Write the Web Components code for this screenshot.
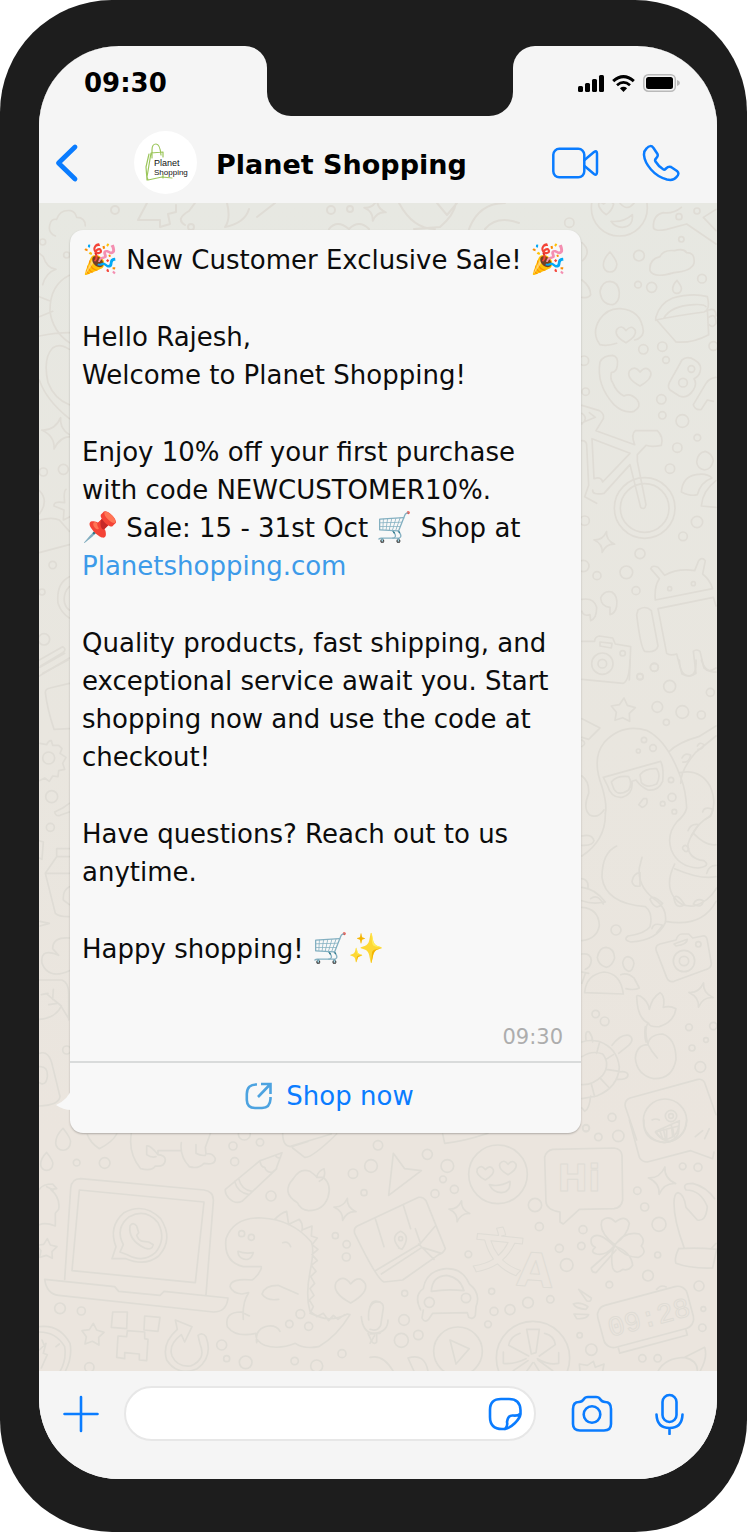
<!DOCTYPE html>
<html lang="en">
<head>
<meta charset="utf-8">
<meta name="viewport" content="width=device-width, initial-scale=1">
<title>Planet Shopping chat</title>
<style>
  body { margin: 0; background: #fff; font-family: "DejaVu Sans", "Noto Color Emoji", sans-serif; color: #0c0c0c; }
  a { color: #3d9be9; text-decoration: none; }
  .emoji { font-size: 29px; line-height: 0; }
</style>
</head>
<body>
<phone-frame>
  <status-bar time="09:30"></status-bar>
  <chat-header name="Planet Shopping"></chat-header>
  <chat-area>
    <chat-bubble time="09:30">
      <p><span class="emoji">🎉</span> New Customer Exclusive Sale! <span class="emoji">🎉</span></p>
      <p>Hello Rajesh,<br>Welcome to Planet Shopping!</p>
      <p>Enjoy 10% off your first purchase<br>with code NEWCUSTOMER10%.<br><span class="emoji">📌</span> Sale: 15 - 31st Oct <span class="emoji">🛒</span> Shop at<br><a href="#shop">Planetshopping.com</a></p>
      <p>Quality products, fast shipping, and<br>exceptional service await you. Start<br>shopping now and use the code at<br>checkout!</p>
      <p>Have questions? Reach out to us<br>anytime.</p>
      <p>Happy shopping! <span class="emoji">🛒✨</span></p>
      <span slot="action">Shop now</span>
    </chat-bubble>
  </chat-area>
  <chat-composer></chat-composer>
</phone-frame>

<script>
class Base extends HTMLElement {
  connectedCallback() {
    if (this.shadowRoot) return;
    this.attachShadow({ mode: "open" }).innerHTML = this.render();
  }
}

customElements.define("phone-frame", class extends Base {
  render() {
    return `<style>
      :host { display: flex; box-sizing: border-box; min-height: calc(100vh - 1px); margin: 0 1px 1px 0;
        padding: 46px 30px 53px 39px; background: #1d1d1d; border-radius: 112px; }
      main { flex: 1; min-width: 0; display: flex; flex-direction: column; overflow: hidden;
        border-radius: 80px; background: #f5f5f5; }
      ::slotted(chat-area) { flex: 1; }
    </style><main><slot></slot></main>`;
  }
});

customElements.define("status-bar", class extends Base {
  render() {
    return `<style>
      :host { display: grid; grid-template-columns: 228fr 246px 204fr; height: 70px; background: #1d1d1d; }
      .side { display: flex; align-items: center; background: #f5f5f5; box-sizing: border-box; }
      .left { border-top-right-radius: 22px; padding: 4px 0 0 45px; font-size: 26px; font-weight: bold; color: #000; }
      .right { border-top-left-radius: 22px; padding: 4px 37px 0 0; justify-content: flex-end; gap: 8px; }
      .mid { background: #f5f5f5; }
      .notch { height: 100%; background: #1d1d1d; border-radius: 0 0 24px 24px; }
      svg { display: block; }
    </style>
    <div class="side left"><time>${this.getAttribute("time")}</time></div>
    <div class="mid"><div class="notch"></div></div>
    <div class="side right">
      <svg width="26" height="17" viewBox="0 0 26 17" aria-label="Signal">
        <rect x="0" y="11" width="5" height="6" rx="1.5"/><rect x="7" y="8" width="5" height="9" rx="1.5"/>
        <rect x="14" y="4" width="5" height="13" rx="1.5"/><rect x="21" y="0" width="5" height="17" rx="1.5"/>
      </svg>
      <svg width="23" height="17" viewBox="0 0 23 17" fill="none" stroke="#000" aria-label="Wi-Fi">
        <path d="M1.2 6.2Q11.5-3 21.8 6.2" stroke-width="3"/><path d="M5 10.2Q11.5 4.6 18 10.2" stroke-width="2.8"/>
        <path d="M7.9 13.3Q11.5 10.4 15.1 13.3L11.5 17z" fill="#000" stroke="none"/>
      </svg>
      <svg width="37" height="18" viewBox="0 0 37 18" aria-label="Battery">
        <rect x=".8" y=".8" width="31.5" height="16.4" rx="4.5" fill="none" stroke="#b9b9b9" stroke-width="1.5"/>
        <rect x="3" y="3" width="27" height="12" rx="2.5"/><path d="M34 6q3 1 3 3t-3 3z" fill="#b9b9b9"/>
      </svg>
    </div>`;
  }
});

customElements.define("chat-header", class extends Base {
  render() {
    return `<style>
      :host { display: flex; align-items: center; box-sizing: border-box; height: 87px; padding: 6px 37px 0 16px; background: #f5f5f5; }
      button { border: 0; padding: 0; background: none; display: block; cursor: pointer; }
      svg { display: block; fill: none; stroke: #0a7cff; stroke-linejoin: round; stroke-linecap: round; }
      .avatar { width: 63px; height: 63px; margin: 0 19px 0 55px; border-radius: 50%; background: #fff; flex: none; }
      .avatar svg { stroke: #9cc65c; }
      h1 { flex: 1; min-width: 0; margin: 0; padding-top: 4px; font-size: 27px; line-height: 36px; color: #000; white-space: nowrap; }
      .video { margin-right: 43px; }
    </style>
    <button aria-label="Back"><svg width="24" height="40" viewBox="0 0 24 40"><path d="M20 4 3.500 20 20 36" stroke-width="4.800"/></svg></button>
    <div class="avatar"><svg width="63" height="63" viewBox="0 0 63 63" stroke-width="1.200">
      <path d="M17 22 13 46 14 49 28 46 38 47M17 22 29 21 29 26M15 23 12 36 13 49M29 47V44M18 27V19Q18 13 22 13Q26 13 27 24"/>
      <text x="20" y="35" font-family="Liberation Sans, sans-serif" font-size="9" fill="#111" stroke="none">Planet</text>
      <text x="20" y="44" font-family="Liberation Sans, sans-serif" font-size="8" fill="#111" stroke="none">Shopping</text>
    </svg></div>
    <h1>${this.getAttribute("name")}</h1>
    <button class="video" aria-label="Video call"><svg width="48" height="32" viewBox="0 0 48 32" stroke-width="2.500">
      <rect x="2.300" y="1.800" width="31" height="28.500" rx="6"/><path d="M33.500 13 43 5q3-2 3 1.500V25q0 4-3 2L33.500 19"/></svg></button>
    <button aria-label="Voice call"><svg width="38" height="38" viewBox="0 0 38 38" stroke-width="2.500">
      <path d="M4.500 4.500Q8.500 0 11.500 4L15.500 10Q16.500 12 14 14.500Q12.500 16 13.500 17.500Q16.500 22.500 21.500 25.500Q22.500 26 24 24.500Q26.500 22 29 23L35 27Q38 29.500 34.500 33Q31.500 37 25 35.500Q15.500 33 9 25.500Q2.500 18 2 11Q1.800 7 4.500 4.500Z"/></svg></button>`;
  }
});

/* Each doodle sheet is [x, y, w, h, markup, dots]; its drawing units are a third of a pixel. */
const star = (x, y, r) => {
  let d = "";
  for (let i = 0; i < 10; i++) {
    const a = i * Math.PI / 5 - 1.5, k = i % 2 ? r * 0.55 : r;
    d += (i ? "L" : "M") + Math.round(x + k * Math.cos(a)) + " " + Math.round(y + k * Math.sin(a));
  }
  return `<path d="${d}Z"/>`;
};
const spark = (x, y, r) => `<path transform="rotate(12 ${x} ${y})" d="M${x} ${y - r}q${r * .1} ${r * .8} ${r} ${r}q${-r * .8} ${r * .1} ${-r} ${r}q${-r * .1} ${-r * .8} ${-r} ${-r}q${r * .8} ${-r * .1} ${r} ${-r}z"/>`;
const heart = (x, y, r) => `<path d="M${x} ${y + r}Q${x - r * 1.300} ${y + r * .3} ${x - r} ${y - r * .4}Q${x - r * .5} ${y - r} ${x} ${y - r * .3}Q${x + r * .6} ${y - r} ${x + r} ${y - r * .3}Q${x + r * 1.200} ${y + r * .3} ${x} ${y + r}Z"/>`;
const drop = (x, y, r) => `<path d="M${x} ${y - r * 1.600}q${r * 1.200} ${r * 1.500} ${r} ${r * 2}a${r} ${r} 0 0 1 ${-2 * r} 0q0 ${-r} ${r} ${-r * 2}z"/>`;

const sheets = [
  [521, -3, 188, 480, `
    <circle cx="178" cy="24" r="84"/><path d="M117 20q-5-20 14-8q16-16 30 0q-5 20-22 32q-14-8-22-24zM180 10q22 26 43-2M153 64q38 4 64-20q4 36-30 38q-22 0-34-18z"/>
    <path d="M468 132 380 72 320 88q-40 8-40-8q0-36 30-42 30 4 54-16M468 28 430 52 468 92"/>
    ${drop(150, 188, 20)}${drop(351, 262, 13)}
    <path d="M270 212q-4-34 30-42q10-22 44-18q26-8 36 6q26 0 22 32q-8 24-60 28q-62 18-72-6z"/>
    <path d="M66 128q30 26 2 54M66 240q26 20 26 44q-6 12-26 8M120 274q6-30 30-30q26 2 28 34q0 30-20 36q-34 0-38-40z"/>
    <path d="M120 434q-26-34-2-74q24-36 62-34q64 4 70 68q-2 20-26 26M120 434q20 6 50-4"/>${heart(198, 400, 28)}
    <path d="M288 350q12-40 50-56q60-16 104-4q10 40-10 46q-90 12-144 24q-2 4 0-10zM312 354q20-36 90-40q30-2 36 6M290 360l58 66q50 4 98-22l-4-78M446 330q22-8 22 18M446 352q22-16 22 18M448 374q10 12 20-4"/>
    <path d="M120 486q10-20 38-20q18 4 14 30q-2 20-18 22q-4 20 4 30q12 30 34 40q20-10 40 12q14 20-10 34q-30 8-60-20q-54-60-42-128z"/>${heart(240, 526, 32)}
    <path d="M328 548 366 480q16-14 38 0q24 14 16 36q-4 14-18 20q10 14-2 34q-18 28-42 18l-28-18q-8-8-2-22z"/><circle cx="369" cy="548" r="13"/><circle cx="394" cy="507" r="10"/>
    <path d="M468 532q-20 2-30 18l-38 64q6 18 24 14l18-28 18 4"/>
    <path d="M66 616l52 16q16 10 12 24L108 692l116 42q-12-32 2-42h66q20 20 12 44q-30 6-46 0l-26 28v20l26 130q-4 18-16 8L210 794l-78 86q-36 6-34-10M66 668l40-16-18-14M96 716l6 120q22-8 26 10l82-86zM66 722q14 0 14 14l6 120-12 34 36 20M66 640q20 14 0 32"/>
    <circle cx="254" cy="924" r="91"/><circle cx="254" cy="924" r="73"/>
    <path d="M410 786q2-28 26-32q20 6 24 28q-6 26-26 28q-22-4-24-24zM364 876q4-46 44-52q32-6 48 10q-34 12-44 50q-20 6-48-8M468 842q-40 30-44 76l44 4"/>
    ${spark(133, 1026, 32)}
    <path d="M286 1200q-4-40 12-64l-26-30q4-12 22-4l20 24q40-22 90-14l12-30q10-12 20 0l-8 40q22 18 30 44zM294 1226 460 1192l8 26M294 1226l26 134q10 8 30 2l16 60q24 12 42-2l-8-66q8-8 20 0l12 50q14 16 36 0M234 1230q22-16 40 2l20 106q-6 22-40 16q-12-10-24-110z"/><circle cx="329" cy="1166" r="6"/><circle cx="400" cy="1151" r="6"/>
    <path d="M66 1198q36-6 44 24q0 34-18 40l-2-18q-20 6-24-10M122 1194q10-24 34-18q18 12 14 42q-4 22-20 26v-22q-26-2-28-28z"/>
    <path d="M66 1324h38q0-14 14-16l40 6 8 18 46 8-4 100M120 1326l36 4-2 14-34-6z"/><circle cx="127" cy="1391" r="32"/><circle cx="127" cy="1391" r="13"/><circle cx="188" cy="1360" r="8"/>`,
    "28 68 14 357 50 9 411 33 9 364 118 8 237 167 16 426 236 13 234 254 10 275 262 15 250 448 14 307 440 14 318 480 10 460 438 13 77 575 11 304 598 14 307 646 11 367 663 19 412 713 10 352 743 14 330 806 14 411 966 17 369 1009 13 74 962 14 240 1061 15 199 1117 19 111 1127 12 228 1172 12 283 1402 12 240 1430 9 72 482 14 70 1098 17"],
  [521, 457, 188, 480, `
    <path d="M66 58l124 12q18-8 20-70M358 0q2 48 30 48q22-2 20-48M424 0q12 40 44 36M66 176l54 28-34 34-20-6M66 240q16 10 0 20"/>
    ${star(189, 152, 38)}
    <path d="M136 460q6-26-10-80q-32-84 6-132q54-60 130-36q60 30 100 140q16 40 18 92q-4 20-28 40q-34 40-18 86q20 50 80 54q40-6 18-22q-50-6-48-50q20-60 68-84q20-40-2-90q-30-52-90-40M326 276q30-30 90-46l52-32M362 370q0-40 44-92q30-24 62-50"/>
    <path d="M130 352l172-48q10 20 6 60q-14 30-44 26q-22-10-36-30l-12 4q4 40-30 48q-32 4-44-36zM154 366q16-20 52-16q12 20 0 40q-30 20-44-2zM240 344q16-20 50-18q14 20 0 46q-30 14-46-4zM236 434l14-18h10q6 20-14 26z"/>
    <path d="M136 460q2 80-70 128M66 348q22 16 20 52q-18 44 2 64q24 14 44-14M170 558q-44 20-44 94q10 78 130 88q24 20 14 60q-14 20-66 28q-16 12 8 18q80-4 104-58q6-40-24-64q-60-40-54-100l8-32M66 682q40 4 70 44q-40 8-70-4M344 612q-30 60-2 100q20 30 60 26q44-12 68-54M344 626q80 34 124 24M316 784q110 20 152-60M400 520q40 40 68 34M66 742q50 4 52 54q-6 40-52 46"/>
    <path d="M66 528q30-8 36 14q-4 16-36 14M66 656q20 4 18 26M92 716q20-16 38 16M216 664q4-24 24-26v40q-22 4-24-14M270 718q6-16 38 12q-20 26-38-12M276 806q4-20 32-10l-18 22M342 716q6-20 32 18q-26 16-32-18M400 732q10-20 30-10q-4 26-30 10M428 456q4-18 30-8q0 20-22 30M384 512q8-22 32-18l-22 34M368 562q8-14 18 4q-6 18-18 0M366 294q8-18 26-8q-6 24-24 20M412 258q6-14 20-4q-4 16-18 14M440 640q6-24 28-24"/>
    <path d="M288 870q-2-14 12-18l48-12q6-18 18-18h20l12 12 30-6q12-2 14 14l12 68q0 14-14 18l-98 36q-16 4-22-12zM342 852l40-14q0 16-34 20z"/><circle cx="372" cy="903" r="32"/><circle cx="372" cy="903" r="14"/><circle cx="415" cy="853" r="8"/>
    ${spark(423, 1005, 37)}
    <path d="M112 892q6-30 26-30q24 2 26 32q-8 26-26 28q-24-8-26-30zM188 908q4-18 16-18q16 4 18 20q-4 24-16 24q-16-6-18-26zM74 998q4-54 58-62q50 4 58 66zM66 882q26-4 28 20q-2 20-18 26M66 936l20 4M182 944q20-8 40 10l16 30q-14 8-40 2M66 970l10-30"/>
    <path d="M266 1090q-34-14-36-80q0-6 10-2q24 14 28 40q8-36 32-50q16 10 10 44q20-6 38 4q-6 40-50 54q-30 2-32-10zM262 1092q-10 20 2 62 10 20 28 40M256 1100q-4 24 2 46M264 1154q2-30 44-32q40 14 40 76q-10 60-68 58q-50-12-54-62q4-40 38-40"/>
    <path d="M66 1146q20-8 50-2q56 20 62 78q-4 60-68 86l-44 8M66 1190q30-20 62-8q24 30 0 64q-30 30-62 28M78 1140q-4-30 10-24q10 14 10 30M156 1156q26-34 50-30q20 10 0 30l-30 24M176 1236q24-4 28 8q0 16-34 14M92 1308q-4 40-18 46l-8-10M118 1150l-8 30M160 1184l-22 14M178 1234l-40-6M148 1284l-26-28M104 1310l-10-38"/>
    <path d="M230 1440 196 1340q-4-18 14-26l204-56q14-2 20 10l34 96"/><circle cx="315" cy="1382" r="65"/><circle cx="333" cy="1368" r="17"/><circle cx="333" cy="1368" r="7"/><path d="M276 1380q12-6 22 0M286 1416l70-18q4 36-26 46q-24 0-44-28M300 1414l8 22M320 1408v30M338 1404l4 26"/>`,
    "283 22 12 240 50 9 329 79 18 451 97 12 292 141 16 367 156 19 424 165 12 319 187 9 252 240 8 279 264 10 235 273 6 333 360 8 336 412 12 308 431 7 343 455 7 168 810 15 107 1062 11 134 1084 13 387 1102 10 438 1140 7 396 1164 9 421 1221 16 156 1372 12 78 1404 10 460 1098 11"],
  [-9, 917, 350, 260, `
    ${drop(99, 60, 22)}${drop(50, 126, 18)}
    <path d="M172 44q10 26 36 42q40-20 52-44M304 40q-10 60 28 106q34 8 44-8q30 4 30-20q-2-12-22-14v-12h68M384 104q-24-30-34-26v26q14 10 28 6M454 68q-6 40 24 72q26 8 44-10q34 6 34-14q-8-18-28-14l-2-20 16-44M498 74v26q14 8 28 6M758 40q0 40 26 40l50-16M788 84l36 28q20 4 96-70M784 78l120-36"/>
    <path d="M586 208 690 122 756 98 738 148 636 244q-20 10-40-10q-12-14-10-26zM614 184q8 34 44 40M626 176q8 34 40 38M690 122q2 20 14 20 6 18 24 14l12-10M736 106q4 8 14 8"/>
    <path d="M790 176q20-34 50-22q14 10 22 18h18q26 22 14 60q-14 40-58 40q-24-2-34-24q-50-30-12-72zM860 172q4-20 22-26q8 26-14 38"/>
    <path d="M104 478 122 206q2-30 30-30l370 34q30 4 28 34L528 524M148 210l374 36-26 242-370-36zM44 478l210 22 12 14 124 12 12-12 192 20q-4 42-44 42L86 526q-36-4-42-48z"/>
    <path d="M246 416l12-36q-24-60 24-102q60-32 110 18q40 62-6 112q-40 32-98 8zM270 396l10-22q-26-50 18-84q50-26 86 18q26 50-8 90q-36 32-84 6zM300 318q8-14 20 0l6 20-6 8q6 18 20 18l16 2 14 8q-4 18-26 10-50-24-44-66z"/>
    ${spark(945, 268, 34)}${star(188, 645, 35)}${star(50, 388, 32)}${heart(962, 505, 44)}
    <path d="M28 208q10-16 40-16l12 14-18 2q30 26 24 60l-10 12v38q-30-12-48-4M50 200l20 10"/>
    <path d="M694 440h-54q-60-14-52-84q24-66 108-62q90 4 148 72q10 20-4 90-14 70 0 118q50 40 112 8l8 2q-40 66-94 96q-44 8-70-10-50 20-92 6-30-14-26-36-60 14-86-20-10-44 42-44l24 12M680 668q-6-44 36-50 24-2 34 16M694 444q-8 24-28 36-64-6-66 20 8 20 36 22l20-4q-20 30-16 80M804 522l-60-26q-40 0-48 26 14 22 50 16M624 394q20 8 46 4-10 30-36 16-10-6-10-20M758 368q18-6 24 12M734 298q20-20 36-24l6 40M778 312l30-14q12 14 8 34M816 330l30-12-2 30 18 6-16 20 18 14-18 16 16 18-18 14 14 18-16 16 12 20-14 16 12 20-14 14 12 20-10 20 26 10M860 590l20-10 16 22 14-16 14 12 20-14"/>
    <path d="M994 590q4 50 40 50h16M1014 640l12 26q8 8 14 0v-22M1016 600q-4-50 24-54h10"/>
    <path d="M248 576h44l-2 50-46-4zM344 588l46 4-6 42-42-4zM292 632l52 4v20l10 2-4 64-22-2v-18l-44-4v18l-24-4 4-64 26 2z"/>
    <path d="M436 600l50 20-22 46-10-22q-40 30-28 64 16 34 56 30 48-20 28-66l-6-26q14-10 24 4 22 60-26 96-60 24-92-26-16-50 32-92z"/>
    <path d="M28 620q60-8 92 50 8 40-14 84M28 636q50 0 76 44 6 40-14 74M36 660l8 20M78 680l10-8M28 690l20-20-8 30 12 4-18 40"/>`,
    "140 128 10 224 129 16 609 78 12 690 67 11 614 125 12 643 42 18 969 161 14 1023 138 19 723 228 15 1002 218 9 916 347 9 950 373 11 949 411 12 90 565 16 154 573 12 635 341 9 664 352 9 778 612 11 811 582 13 836 619 12 575 675 15 590 716 9 647 727 19 794 723 11 860 738 18 936 701 12 178 742 14"],
  [331, 917, 378, 260, `
    <path d="M70 100 104 146 154 152 56 226zM218 42l6 28q60-6 130-30"/>
    <circle cx="384" cy="163" r="88"/>${heart(346, 156, 24)}${heart(414, 140, 24)}<path d="M358 194q30 8 62-10q2 32-26 34-24 0-36-24z"/>
    <path d="M548 88l184-4q22 2 24 22l2 134q-4 24-26 26l-104 2-48 44-10-6V276q-40-6-42-30l-4-134q4-20 24-24z"/>
    <text x="562" y="214" font-size="110" font-weight="bold">Hi</text>
    <path d="M778 0 808 112q8 14 24 14l130-34 66 24 4-20M822 0q-6 60 60 68 62-6 68-68M858 34l70-32q0 50-42 56-20-4-28-24M880 26l6 28M904 14l4 36M976 50l22-18M1018 26l-14 30"/>
    ${spark(876, 182, 42)}${spark(268, 274, 32)}
    <path d="M-46 340q-4-16 8-22L146 232q14-2 22 10l58 144q-6 14-20 18l-108 76-56 6q-20-6-88-146M16 452 150 372 196 318M34 462 156 382 214 400M146 372l46 46M16 296l26 84M100 256l22 70M150 366l-14-40M88 384q-30-34 4-50 32 14 4 54l-10-4"/><circle cx="92" cy="356" r="6"/>
    <text x="310" y="450" font-size="150" font-weight="bold" font-family="Noto Sans CJK SC, sans-serif" transform="rotate(6 390 400)">文</text>
    <text x="442" y="500" font-size="140" font-weight="bold" transform="rotate(4 500 440)">A</text>
    <path d="M734 374q-50-40-38-72 20-18 40 4 30-24 42 4-4 34-44 64zM734 376q30-44 74-34 20 18 6 36 20 20-8 34-40 2-72-36zM734 378q50 18 54 58-12 18-30 12-20 18-30-4-8-40 6-66zM732 378q-50-50-68-22-4 20 12 26-18 14 4 20 28 6 52-24zM730 386l-66 58q0 14 14 14l60-68"/>
    <path d="M942 382q-30-80-30-132 0-30 12-32 18 4 24 44l34 38q26 6 30-40-20-50-64-50-14-20 20-20 40 10 66 46M926 386q-14 30-8 44 40 16 110 14l12-56q-60-6-114-2M1038 370l-14 16"/>
    <path d="M160 570l-4 24q8 16 20 4l12-18 104-2 4 14q14 8 20-6l2-26q16-40-20-68-20-48-70-46-60 6-68 60-30 20-8 64M184 514q2-46 46-48 40 6 52 46-50-6-98 2z"/><circle cx="178" cy="547" r="15"/><circle cx="288" cy="534" r="14"/>
    <path d="M0 560q6-20 22-16 20 4 18 20l-8 52q-10 20-32 12M54 600q0 40-54 42M0 670l14-24"/>
    <circle cx="264" cy="694" r="73"/><path d="M240 660l58 26-40 46z"/>
    <circle cx="489" cy="714" r="110"/><path d="M470 628h38l-10 70-14 4zM524 640q30 8 32 34l-48 34M566 698v32q-30 6-64-14M548 752l-44-32M450 640q-30 10-34 36l60 32M400 696v34q30 4 68-14M430 752l44-30M488 728l-18 26M492 728l16 26"/>
    <path d="M626 508l38 26q0 14-14 8zM610 552q20-8 44 8l-6 8q-30-2-38-16M612 582l44 2q-6 14-36 12z"/>
    <g transform="rotate(-15 826 592)"><rect x="688" y="526" width="278" height="130" rx="30"/><text x="710" y="622" font-size="84" font-family="Liberation Mono, monospace">09:28</text><path d="M724 660v16h210v-16M880 520q16-12 30 0"/></g>
    <path d="M864 754q20-40 80-42l60-30q10 30-14 72M944 712q40 10 38 42M630 754l-2-22 24 4 18-12 6 18 26-10-4 22M0 712q40-10 70 42M114 714q50-16 60 40M114 714l18 40"/>`,
    "24 76 14 172 103 15 232 138 19 219 178 10 253 208 12 195 221 12 295 403 10 495 255 20 508 320 12 568 385 12 590 435 19 648 25 10 685 51 11 745 48 17 938 139 10 984 142 12 802 212 11 824 261 12 867 313 21 639 329 12 634 378 11 863 405 9 834 467 16 718 494 10 987 498 15 474 548 16 541 538 11 420 569 15 372 574 12 365 514 9 354 613 10 104 520 9 102 600 16 94 661 21 145 645 14 629 646 8 664 689 17 817 715 11 863 715 11 997 623 11 1000 567 7"],
  [-3, -3, 60, 480, `
    <path d="M58 108q-24-10-16-36 4-16 20-14 10-30 42-26 14 4 18 20 26 0 26 26M10 160l12 10q10 34 38 38-30 10-40 46M100 226q-60 30-58 110 10 60 58 92M10 290l34 14M10 350l40-16M10 408q50-10 90-10M100 448q-30-20-50-4-30 30-14 104 20 50 64 66M10 540q20 60 90 116"/>
    ${spark(64, 700, 48)}
    <path d="M10 872q30 30 0 70M90 868q-8 6-4 40-34-6-32 10l30 12-2 30 20-10M10 960q40-10 60 0l30 34M10 1058l90-24M100 1130q-40 20-34 80 10 30 34 44M100 1160q-20 20-14 50 4 14 14 20M10 1380l70-40q14 8 0 18l-66 40M12 1402l74-42M10 1428l90-54"/>`,
    "20 126 9 92 165 9 82 808 15 22 816 12 50 1095 11 24 1318 17 18 1176 9"],
  [-3, 457, 60, 480, `
    <path d="M20 40 96 0M28 98q0-12 14-14l58-14M28 98q6 50 26 110l46-2"/>
    <path d="M12 250l20 4q6-14 14-12l4 14 18 0 10 10-6 14 18 12-10 18 6 18-18 4-2 18-16-2-10 16-14-10-16 8"/><circle cx="38" cy="294" r="18"/>
    <path d="M100 430l-20 14-24 12q2 14 16 10l28-10M62 590V566h38M62 590l-34 50 30 120q10 10 40 10M62 590h38M28 640h72M100 680q-20 10-18 40l18 14M10 542l12 4-4 52-8-4M12 784l28 6-28 8"/>
    <path d="M100 834q-50-4-50 32l18 20-16-6q-40-10-34 30 20 50 82 22M10 960l68 0q20 8 20 40v80M10 1078q50-4 66-40L30 1000M50 1018l2-30M36 1000l-20 4M64 1030l-26 4M76 1040l22 36M10 1180q30-10 40 40l22 90q-4 26-62 28M10 1220q26-2 24 30-4 30-24 18"/>`,
    "47 410 18 43 502 12 92 1170 12"]
];

customElements.define("chat-area", class extends Base {
  render() {
    const art = sheets.map(([x, y, w, h, body, dots]) => {
      const n = dots.split(" ");
      let c = "";
      for (let i = 0; i + 2 < n.length; i += 3) c += `<circle cx="${n[i]}" cy="${n[i + 1]}" r="${n[i + 2]}"/>`;
      return `<svg x="${x}" y="${y}" width="${w}" height="${h}" viewBox="0 0 ${w * 3} ${h * 3}" overflow="visible">${body}${c}</svg>`;
    }).join("");
    const top = `<path d="M108 0 99 17h22v7l10-3-2-10 8-2V2M146 22q-10-6 4-14l6-8M188 0q4 16-2 24 20-4 24-18M236 0l-18 14M360 0q14 26 36 26M398 0l10 12 10-12M375 26l26-2q14-12 16-24M430 26q10-26 36-26M446 26q12-14 34-6M290 26q8-10 20 0 10-10 20 0"/>${spark(336, 7, 11)}<circle cx="76" cy="7" r="4"/><circle cx="152" cy="24" r="3"/><circle cx="292" cy="7" r="4"/><circle cx="311" cy="6" r="3"/>`;
    return `<style>
      :host { display: block; position: relative; box-sizing: border-box; overflow: hidden; padding: 27px 31px 40px;
        background: linear-gradient(#e7e8e2, #e9e6df 45%, #ebe5de 80%); }
      .art { position: absolute; inset: 0; width: 100%; height: 100%; fill: none; stroke: #dfdcd5; stroke-width: 5;
        stroke-linejoin: round; stroke-linecap: round; font-family: "DejaVu Sans", sans-serif; }
      .art text { stroke-width: 3; }
      .top { stroke-width: 2; }
      .content { position: relative; }
    </style>
    <svg class="art" viewBox="0 0 678 1168" preserveAspectRatio="xMinYMin slice" aria-hidden="true">${art}<g class="top">${top}</g></svg>
    <div class="content"><slot></slot></div>`;
  }
});

customElements.define("chat-bubble", class extends Base {
  render() {
    return `<style>
      :host { display: block; position: relative; max-width: 511px; border-radius: 13px; background: #f8f8f8;
        box-shadow: 0 1px 2px rgba(0,0,0,.25); font-size: 26px; line-height: 38px; }
      .text { display: flex; flex-direction: column; gap: 39px; padding: 11px 4px 0 12px; }
      ::slotted(p) { margin: 0; }
      time { display: block; padding: 53px 18px 8px; text-align: right; font-size: 21px; line-height: 32px; color: #adadad; }
      button { display: flex; align-items: center; justify-content: center; gap: 14px; width: 100%; height: 72px; padding: 0 0 4px 8px;
        border: 0; border-top: 2px solid #d9dbdb; background: none; font: inherit; color: #0a7cff; cursor: pointer; }
      svg { display: block; fill: none; }
      .tail { position: absolute; left: -15px; bottom: 20px; fill: #f8f8f8; }
    </style>
    <svg class="tail" width="17" height="26" viewBox="0 0 17 26"><path d="M17 0Q14 12 1 18Q8 23 17 23Z"/></svg>
    <div class="text"><slot></slot></div>
    <time>${this.getAttribute("time")}</time>
    <button><svg width="27" height="28" viewBox="0 0 27 28" stroke="#4da3e0" stroke-width="2.600" aria-hidden="true">
      <path d="M12 2.500Q2 2 1.800 12V18Q2 26 10 26H17Q25 26 25.500 17V15M16 2H25.500V12M25 2.500 13 15"/></svg><slot name="action"></slot></button>`;
  }
});

customElements.define("chat-composer", class extends Base {
  render() {
    return `<style>
      :host { display: flex; align-items: center; padding: 15px 33px 38px 24px; background: #f5f5f5; }
      button { flex: none; border: 0; padding: 0; background: none; cursor: pointer; }
      svg { display: block; fill: none; stroke: #0a7cff; stroke-width: 2.600; stroke-linecap: round; stroke-linejoin: round; }
      .field { flex: 1; min-width: 0; display: flex; align-items: center; box-sizing: border-box; height: 55px; margin: 0 35px 0 25px;
        padding: 0 12px 0 24px; border: 2px solid #e7e7e7; border-radius: 28px; background: #fff; }
      input { flex: 1; min-width: 0; border: 0; outline: 0; background: none; font: inherit; font-size: 26px; }
      .camera { margin-right: 42px; }
    </style>
    <button aria-label="Attach"><svg width="36" height="38" viewBox="0 0 36 38"><path d="M18 2V36M1.500 19H34.500"/></svg></button>
    <div class="field"><input type="text" aria-label="Message">
      <button aria-label="Stickers"><svg width="34" height="34" viewBox="0 0 34 34"><path d="M17 32H14Q2 32 2 20V13Q2 2 13 2H21Q32 2 32.500 13V17Q32 21 27 26T17 32ZM17 32Q20 29 19 25Q20 18 25 18.500Q30 19 32 17"/></svg></button></div>
    <button class="camera" aria-label="Camera"><svg width="42" height="38" viewBox="0 0 42 38">
      <path d="M2 14Q2 7 8 7Q11 7 13 4Q14 2 17 2H25Q28 2 29 4Q31 7 34 7Q40 7 40 14V29Q40 35.500 33 35.500H9Q2 35.500 2 29Z"/><circle cx="21" cy="19.500" r="8.300"/></svg></button>
    <button aria-label="Voice message"><svg width="29" height="42" viewBox="0 0 29 42">
      <rect x="7.500" y="2" width="14" height="27" rx="7"/><path d="M1.500 21.500Q2 35 14.500 35Q27 35 27.500 21.500M14.500 35V41"/></svg></button>`;
  }
});
</script>
</body>
</html>
